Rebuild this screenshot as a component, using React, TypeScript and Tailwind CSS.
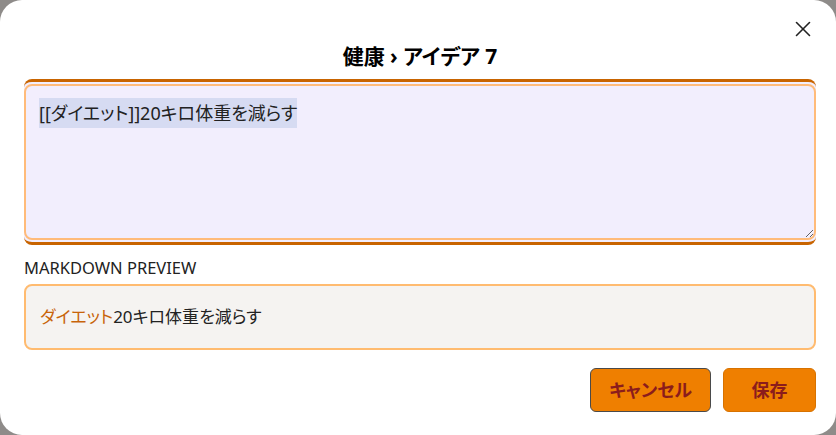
import { X } from "lucide-react";

const font = { fontFamily: '"Noto Sans", "Noto Sans CJK JP", sans-serif' };

export default function App() {
  return (
    <div className="h-[435px] w-[836px] bg-[#8e8b89]" style={font}>
      <div className="relative flex h-full flex-col rounded-[22px] bg-white pl-6 pr-5 [font-feature-settings:'palt']">
        <button
          type="button"
          className="absolute right-[20px] top-[16px] text-[#222]"
          aria-label="close"
        >
          <X size={26} strokeWidth={1.5} />
        </button>

        <h2 className="mt-[40px] text-center text-[21px] font-bold leading-[32px] text-black">
          健康 › アイデア 7
        </h2>

        <div className="mt-[7px] rounded-lg border-y-[3px] border-[#c86400] bg-[#f2eefd] py-[2px]">
          <div className="h-[156px] resize-y overflow-auto rounded-lg border-2 border-[#ffbb7a] bg-[#f2eefd] px-[13px] pt-[12px]">
            <span className="bg-[#d6dbf2] py-[3px] text-[18px] leading-[30px] text-[#222]">
              [[ダイエット]]20キロ体重を減らす
            </span>
          </div>
        </div>

        <p className="mt-[12px] text-[16.5px] leading-[22px] text-[#222]">MARKDOWN PREVIEW</p>

        <div className="mt-[5px] flex h-[66px] items-center rounded-lg border-2 border-[#ffbb70] bg-[#f5f3f1] px-[14px] text-[17px] text-[#222]">
          <span className="text-[#c8640a]">ダイエット</span>
          <span>20キロ体重を減らす</span>
        </div>

        <div className="mt-[18px] flex justify-end gap-3">
          <button
            type="button"
            className="h-[44px] w-[121px] rounded-md border border-[#4a4a4a] bg-[#ef7f00] text-[18px] font-bold text-[#8b1c1c]"
          >
            キャンセル
          </button>
          <button
            type="button"
            className="h-[44px] w-[93px] rounded-md border border-[#d77200] bg-[#ef7f00] text-[18px] font-bold text-[#8b1c1c]"
          >
            保存
          </button>
        </div>
      </div>
    </div>
  );
}
